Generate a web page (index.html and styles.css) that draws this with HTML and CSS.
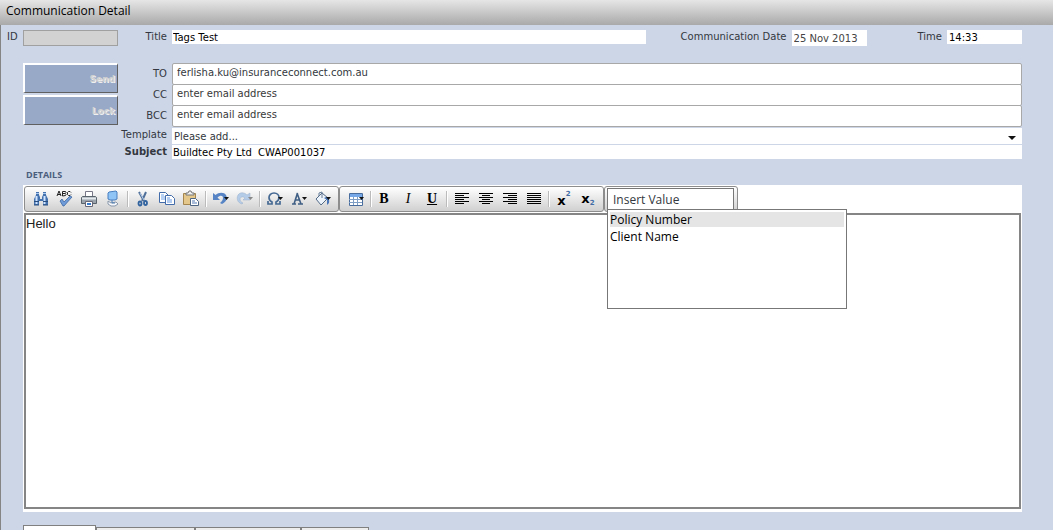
FILE: index.html
```
<!DOCTYPE html>
<html lang="en">
<head>
<meta charset="utf-8">
<title>Communication Detail</title>
<link rel="stylesheet" href="styles.css">
</head>
<body>
<header class="titlebar"><h1>Communication Detail</h1></header>
<main class="page">
  <div class="summary">
    <label class="label" for="id">ID</label>
    <input class="id-field" id="id" type="text" disabled>
    <label class="label" for="title">Title</label>
    <div class="summary-fields">
      <input class="field grow" id="title" type="text" value="Tags Test">
      <label class="label" for="date">Communication Date</label>
      <input class="field short date" id="date" type="text" value="25 Nov 2013">
      <label class="label" for="time">Time</label>
      <input class="field short" id="time" type="text" value="14:33">
    </div>
  </div>
  <div class="message">
    <div class="actions">
      <button type="button">Send</button>
      <button type="button">Lock</button>
    </div>
    <div class="rows">
      <div class="row"><label class="label" for="to">TO</label><input class="address" id="to" type="text" value="ferlisha.ku@insuranceconnect.com.au"></div>
      <div class="row"><label class="label" for="cc">CC</label><input class="address" id="cc" type="text" placeholder="enter email address"></div>
      <div class="row"><label class="label" for="bcc">BCC</label><input class="address" id="bcc" type="text" placeholder="enter email address"></div>
      <div class="row template"><label class="label" for="template">Template</label>
        <div class="select-wrap"><select id="template"><option>Please add...</option></select></div></div>
      <div class="row subject"><label class="label" for="subject">Subject</label><input class="field" id="subject" type="text" value="Buildtec Pty Ltd  CWAP001037"></div>
    </div>
  </div>
  <h2 class="section">DETAILS</h2>
  <section class="editor">
    <div class="toolbar">
      <div class="group">
        <button type="button" aria-label="Find"><svg viewBox="0 0 18 18"><path d="M4 2h3v3l1 2v2h2V7l1-2V2h3v3l2 4v6h-5v-4H7v4H2V9l2-4z" fill="#4472ae"/><path d="M4.500 6v8M12.500 6v8" stroke="#cfe4ff" stroke-width="2"/><path d="M4 3.500h3M11 3.500h3" stroke="#a9c8f0"/><path d="M2 11.500h5M11 11.500h5M2 15h5M11 15h5" stroke="#294d7d"/></svg></button>
        <button type="button" aria-label="Check spelling"><svg viewBox="0 0 18 18"><path d="M1 6l2-5 2 5M2 4.500h3M6.500 6V1.500h3l.5 1-1 1 1 1-.5 1zM6.500 3.500h3M15 2.500l-1-1h-1.500l-1 1v2l1 1H14l1-1" fill="none" stroke="#222"/><path d="M4 11l2-2 2 3 6-6 2 1-8 9H7z" fill="#6f9bd8" stroke="#315d9b" stroke-width=".7"/></svg></button>
        <button type="button" aria-label="Print"><svg viewBox="0 0 18 18"><path d="M5.500 1.500h7v5h-7z" fill="#fff" stroke="#778"/><path d="M1.500 7.500l1-1h13l1 1v6h-15z" fill="#9aa3ab" stroke="#59636b"/><path d="M2 8.500h14" stroke="#e3e8ec" stroke-width="2"/><path d="M5.500 11.500h7v5h-7z" fill="#fff" stroke="#667"/><path d="M7 14h4" stroke="#377ccc" stroke-width="2"/></svg></button>
        <button type="button" aria-label="Show guides"><svg viewBox="0 0 18 18"><path d="M5 2l7-1 1 1v7l-2 1H6L4 9V3z" fill="#8fc4f6" stroke="#487ec0"/><path d="M4 11l3 2 5-1 2 2-3 2H7l-3-2z" fill="#f5f7fa" stroke="#8796a8"/><path d="M8 10v3h3" stroke="#4c7cb4" fill="none"/></svg></button>
        <span class="sep"></span>
        <button type="button" aria-label="Cut"><svg viewBox="0 0 18 18"><path d="M5 2l5 9M12 2l-4 9" stroke="#50709a" stroke-width="2"/><path d="M6 3l4 7" stroke="#bad0ec"/><ellipse cx="6" cy="13.500" rx="1.500" ry="2" fill="none" stroke="#31639f" stroke-width="1.800"/><ellipse cx="11.500" cy="13" rx="1.500" ry="2" fill="none" stroke="#31639f" stroke-width="1.800"/></svg></button>
        <button type="button" aria-label="Copy"><svg viewBox="0 0 18 18"><g fill="#fff" stroke="#426daa"><path d="M1.500 2.500h6l3 3v7h-9z"/><path d="M3 5h3M3 7h5M3 9h5" stroke="#6ca2e8"/><path d="M7.500 5.500h6l3 3v6h-9z"/><path d="M9 8h3M9 10h5M9 12h5" stroke="#6296e0"/></g></svg></button>
        <button type="button" aria-label="Paste"><svg viewBox="0 0 18 18"><path d="M1.500 3.500h12v11h-12z" fill="#e3c78b" stroke="#a3854d"/><path d="M4 5V3h2l1-2h2l1 2h2v2z" fill="#eee" stroke="#777"/><path d="M8.500 8.500h5l3 3v4h-8z" fill="#fff" stroke="#4c6584"/><path d="M10 11h3M10 13h5" stroke="#527ab4"/></svg></button>
        <span class="sep"></span>
        <button type="button" aria-label="Undo"><svg viewBox="0 0 18 18"><path d="M1 3v7h7L5.500 7.500C8 5 11 5 11 8c0 2-1 3-3 5l2 1c4-2 6-5 4-9C12 2 7 2 3.500 5z" fill="#5684c4"/><path d="M12 7h5l-2.500 3z" fill="#111"/></svg></button>
        <button type="button" aria-label="Redo"><svg viewBox="0 0 18 18"><path d="M14 3v7H7l2-2C7 6 4 7 4 9s1 3 3 4l-1 1C2 13 0 9 2 5c2-3 6-3 9 0z" fill="#b5cce8" stroke="#98aec9" stroke-width=".5"/><path d="M12 7h5l-2.500 3z" fill="#888"/></svg></button>
        <span class="sep"></span>
        <button type="button" aria-label="Insert symbol"><svg viewBox="0 0 18 18"><path d="M2 11v3h4v-2C4 11 3 9.500 3 7.500 3 5 5 3 8 3s5 2 5 4.500c0 2-1 3.500-3 4.500v2h4v-3" fill="none" stroke="#456993" stroke-width="1.700"/><path d="M12 7h5l-2.500 3z" fill="#111"/></svg></button>
        <button type="button" aria-label="Text colour"><svg viewBox="0 0 18 18"><path d="M7.500 3L4 14M7 3l4 11M5 10h5M2 14h4M8 14h5" fill="none" stroke="#405f84" stroke-width="1.600"/><path d="M12 7h5l-2.500 3z" fill="#111"/></svg></button>
        <button type="button" aria-label="Fill colour"><svg viewBox="0 0 18 18"><path d="M2 9l6-6 6 5-7 7z" fill="#edf3fa" stroke="#536a87"/><path d="M8 8V2l-3 1v3" fill="none" stroke="#667d98"/><path d="M12 7q4 1 3 6l-2 2v-5l-3-2z" fill="#4775b8"/><path d="M12 7h5l-2.500 3z" fill="#111"/></svg></button>
      </div>
      <div class="group">
        <button type="button" aria-label="Insert table"><svg viewBox="0 0 18 18"><path d="M2.500 3.500h13v12h-13z" fill="#fff" stroke="#486d9d"/><path d="M3 4h12v3H3z" fill="#76a7e6"/><path d="M2 9.500h13M2 12.500h13M6.500 7v8M10.500 7v8" stroke="#7f9ec5"/><path d="M12 7h5l-2.500 3z" fill="#111"/></svg></button>
        <span class="sep slim"></span>
        <button class="letter bold" type="button">B</button>
        <button class="letter italic" type="button">I</button>
        <button class="letter underline" type="button">U</button>
        <span class="sep"></span>
        <button type="button" aria-label="Align left"><svg viewBox="0 0 18 18"><path d="M2 3.500h14M2 5.500h9M2 7.500h14M2 9.500h9M2 11.500h14M2 13.500h9" stroke="#000"/></svg></button>
        <button type="button" aria-label="Align centre"><svg viewBox="0 0 18 18"><path d="M2 3.500h14M5 5.500h8M2 7.500h14M5 9.500h8M2 11.500h14M5 13.500h8" stroke="#000"/></svg></button>
        <button type="button" aria-label="Align right"><svg viewBox="0 0 18 18"><path d="M2 3.500h14M7 5.500h9M2 7.500h14M7 9.500h9M2 11.500h14M7 13.500h9" stroke="#000"/></svg></button>
        <button type="button" aria-label="Justify"><svg viewBox="0 0 18 18"><path d="M2 3.500h14M2 5.500h14M2 7.500h14M2 9.500h14M2 11.500h14M2 13.500h14" stroke="#000"/></svg></button>
        <span class="sep"></span>
        <button class="script raised" type="button" aria-label="Superscript">x<sup>2</sup></button>
        <button class="script" type="button" aria-label="Subscript">x<sub>2</sub></button>
      </div>
      <div class="group insert">
        <input type="text" value="Insert Value" aria-label="Insert value" readonly>
        <ul class="menu">
          <li><button class="active" type="button">Policy Number</button></li>
          <li><button type="button">Client Name</button></li>
        </ul>
      </div>
    </div>
    <textarea aria-label="Details">Hello</textarea>
  </section>
  <nav class="tabs">
    <button class="tab current" type="button" aria-label="Tab 1"></button>
    <button class="tab second" type="button" aria-label="Tab 2"></button>
    <button class="tab third" type="button" aria-label="Tab 3"></button>
    <button class="tab fourth" type="button" aria-label="Tab 4"></button>
  </nav>
</main>
</body>
</html>
```
FILE: styles.css
```
* { box-sizing: border-box; }
body {
  margin: 0;
  min-height: 100vh;
  overflow: hidden;
  display: flex;
  flex-direction: column;
  background: #cdd6e7;
  color: #333840;
  font: 10px/14px "DejaVu Sans", Verdana, sans-serif;
}
input, select, textarea, button {
  margin: 0;
  padding: 0;
  border: 0;
  border-radius: 0;
  font: inherit;
  color: inherit;
  background: none;
  outline: 0;
}
.titlebar {
  height: 25px;
  padding: 0 6px;
  display: flex;
  align-items: center;
  background: linear-gradient(#e6e6e6, #a9a9a9);
}
h1 {
  margin: 0 0 3px;
  color: #000;
  font: 12px/18px "Open Sans", "Noto Sans", sans-serif;
}
.page {
  flex: 1;
  padding: 5px 31px 0 22px;
  border-left: 1px solid #858585;
}
.summary {
  display: grid;
  grid-template-columns: 16px 95px 54px 1fr;
  margin-left: -16px;
}
.label { white-space: nowrap; text-align: right; padding-right: 5px; }
.summary > .label:first-child { padding: 0; text-align: left; }
.id-field { height: 16px; width: 100%; border: 1px solid #a0a0a0; background: #d2d2d2; }
.summary-fields { display: flex; align-items: flex-start; min-width: 0; }
.summary-fields .label { padding-left: 35px; }
.summary-fields .label + .date + .label { padding-left: 51px; }
.field { height: 14px; padding: 1px 1px 0; background: #fff; color: #000; min-width: 0; }
.grow { flex: 1; }
.short { width: 75px; padding: 1px 2px 0; }
.date { height: 16px; padding: 0 2px; color: #444; }
.message { display: flex; margin-top: 17px; }
.actions { width: 95px; display: flex; flex-direction: column; gap: 2px; }
.actions button {
  height: 30px;
  padding-right: 2px;
  border: 1px solid #666;
  border-width: 2px 1px 1px 2px;
  border-color: #fff #606060 #606060 #fff;
  background: #98a9c8;
  color: #d0d0d0;
  text-shadow: 1px 1px 0 #f0f0f0;
  text-align: right;
  font-size: 9px;
  font-weight: bold;
}
.rows { flex: 1; min-width: 0; }
.row { display: grid; grid-template-columns: 54px 1fr; height: 21px; align-items: center; }
.address {
  height: 22px;
  align-self: start;
  padding: 0 4px 3px;
  border: 1px solid #a8a8a8;
  border-radius: 2px;
  background: #fff;
}
.address::placeholder { color: #383838; opacity: 1; }
.template { height: 16px; margin-top: 2px; align-items: start; }
.select-wrap { position: relative; height: 16px; background: #fff; }
.select-wrap::after {
  content: "";
  position: absolute;
  right: 6px;
  top: 8px;
  border: 4px solid transparent;
  border-top-color: #111;
  border-bottom: 0;
  pointer-events: none;
}
select { width: 100%; height: 16px; padding: 2px 2px 0; appearance: none; }
.subject { height: 14px; margin-top: 1px; }
.subject .label { font-weight: bold; }
.subject .field { white-space: pre; }
.section {
  margin: 8px 0 3px;
  padding-left: 3px;
  color: #4a5d7c;
  font: bold 9px/15px "Open Sans", "Noto Sans", sans-serif;
}
.editor { padding: 1px 1px 3px; background: #fff; }
.toolbar { display: flex; height: 27px; }
.group {
  height: 26px;
  padding: 0 3px 0 4px;
  display: flex;
  align-items: center;
  border: 1px solid #8d8d8d;
  border-radius: 3px;
  background: linear-gradient(#fff, #d0d0d0);
}
.group > button { width: 24px; height: 24px; display: flex; align-items: center; justify-content: center; }
.group svg { width: 18px; height: 18px; fill: none; }
.sep { width: 6px; height: 16px; background: linear-gradient(90deg, transparent 2px, #bbb 2px 3px, #fff 3px 4px, transparent 4px); }
.slim { width: 4px; }
.group .letter { color: #000; font: 14px/16px "Liberation Serif", serif; }
.group .bold { font-weight: bold; }
.group .italic { font-style: italic; }
.group .underline { font-weight: bold; text-decoration: underline; }
.group .script { color: #000; font: bold 13px/14px "DejaVu Sans", sans-serif; }
.group .raised { padding-top: 3px; }
.script sup, .script sub { color: #416ba4; font-size: 7px; line-height: 7px; }
.script sup { align-self: flex-start; margin-top: 1px; }
.script sub { align-self: flex-end; margin-bottom: 4px; }
.insert { position: relative; width: 134px; padding: 0 3px 0 2px; align-items: stretch; }
.insert input {
  width: 100%;
  height: 23px;
  margin-top: 1px;
  padding: 0 5px;
  border: 1px solid #777;
  background: #fff;
  font: 12px/18px "Open Sans", "Noto Sans", sans-serif;
}
.menu {
  position: absolute;
  z-index: 1;
  left: 2px;
  top: 22px;
  width: 240px;
  height: 100px;
  margin: 0;
  padding: 2px;
  list-style: none;
  border: 1px solid #777;
  background: #fff;
}
.menu button {
  display: block;
  width: 100%;
  height: 17px;
  text-align: left;
  color: #000;
  font: 12px/15px "Open Sans", "Noto Sans", sans-serif;
}
.menu .active { height: 15px; margin-bottom: 1px; background: #e5e5e5; }
textarea {
  display: block;
  width: 100%;
  height: calc(100vh - 234px);
  min-height: 160px;
  resize: none;
  border: 2px solid #858585;
  background: #fff;
  color: #222;
  font: 13px/18px "Liberation Sans", Arial, sans-serif;
}
.tabs { display: flex; align-items: flex-end; height: 20px; margin-top: 13px; }
.tab { height: 18px; border: 1px solid #808080; background: #ededed; }
.current { width: 73px; height: 20px; background: #fff; }
.second { width: 99px; }
.third { width: 106px; }
.fourth { width: 68px; }
```
